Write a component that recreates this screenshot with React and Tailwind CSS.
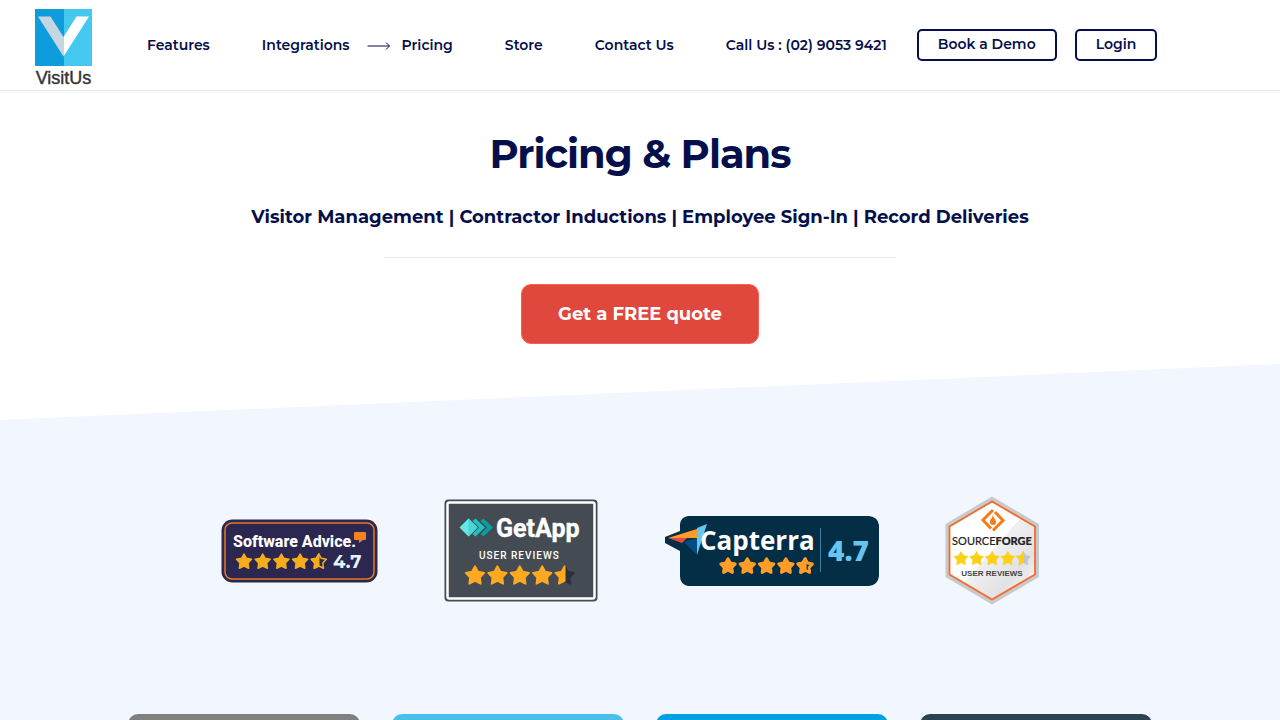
import React from 'react';

const navLinks = [
  { label: 'Features', href: '#features' },
  { label: 'Integrations', href: '#integrations' },
  { label: 'Pricing', href: '#pricing', active: true },
  { label: 'Store', href: '#store' },
  { label: 'Contact Us', href: '#contact' },
  { label: 'Call Us : (02) 9053 9421', href: 'tel:0290539421' },
];

const plans = [
  { id: 'starter', color: 'bg-[#808080]' },
  { id: 'basic', color: 'bg-[#49bfea]' },
  { id: 'business', color: 'bg-[#00a0e3]' },
  { id: 'enterprise', color: 'bg-[#2c4452]' },
];

const STAR = 'M0-10 L3.3-4.2 L10-2.9 L5.4 2 L6.2 9 L0 6 L-6.2 9 L-5.4 2 L-10-2.9 L-3.3-4.2Z';
const LEFT_HALF = 'M0-10 L0 6 L-6.2 9 L-5.4 2 L-10-2.9 L-3.3-4.2Z';

const Stars = ({ x, y, step, scale, fill, rest, outline, round = 2 }) => (
  <g fill={fill} stroke={fill} strokeWidth={round} strokeLinejoin="round">
    {[0, 1, 2, 3].map((i) => (
      <path key={i} d={STAR} transform={`translate(${x + i * step} ${y}) scale(${scale})`} />
    ))}
    <g transform={`translate(${x + 4 * step} ${y}) scale(${scale})`}>
      <path d={STAR} fill={rest} stroke={outline ? fill : rest} />
      <path d={LEFT_HALF} />
    </g>
  </g>
);

const Logo = () => (
  <a href="#home" aria-label="VisitUs" className="shrink-0 pt-2">
    <svg width="58" height="80" viewBox="0 0 58 80">
      <path d="M0 0h29v57H0z" fill="#0d9ddd" />
      <path d="M29 0h28v57H29z" fill="#45c8f0" />
      <path d="M3 7.500h12.500L28.500 28v19.500z" fill="#c6d5e2" />
      <path d="M54 7.500H41.500L28.500 28v19.500z" fill="#fff" />
      <text x="28.500" y="74.500" textAnchor="middle" fontFamily="Liberation Sans, sans-serif" fontSize="18" fill="#333" stroke="#333" strokeWidth="0.400">VisitUs</text>
    </svg>
  </a>
);

const SoftwareAdviceBadge = () => (
  <svg width="157" height="64" viewBox="0 0 157 64" role="img" aria-label="Software Advice 4.7">
    <rect x="0.500" y="0.500" width="156" height="63" rx="11" fill="#2b2750" />
    <rect x="4" y="4" width="149" height="56" rx="7" fill="none" stroke="#e87a1d" strokeWidth="1.500" />
    <text x="12" y="27.500" fontFamily="Roboto, sans-serif" fontWeight="800" fontSize="16" fill="#fff">Software Advice.</text>
    <path d="M134 13h10a1 1 0 0 1 1 1v6a1 1 0 0 1-1 1h-2l-4 3v-3h-4a1 1 0 0 1-1-1v-6a1 1 0 0 1 1-1z" fill="#f58220" />
    <Stars x={23} y={42.500} step={18.700} scale={0.750} fill="#f5ad1b" rest="#2b2750" outline />
    <text x="112" y="49" fontFamily="Montserrat, sans-serif" fontWeight="700" fontSize="18" fill="#e5f3fb">4.7</text>
  </svg>
);

const GetAppBadge = () => (
  <svg width="154" height="104" viewBox="0 0 154 104" role="img" aria-label="GetApp user reviews">
    <rect x="0.500" y="0.500" width="153" height="102" rx="4" fill="#454b52" />
    <rect x="3.500" y="3.500" width="147" height="96" rx="2" fill="none" stroke="#fff" strokeWidth="2.500" />
    <path d="M39.500 19.500l9.500 9-9.500 9-3-2.500 6.500-6.500-6.500-6.500z" fill="#0b9c9d" />
    <path d="M31.500 19.500l9.500 9-9.500 9-3-2.500 6.500-6.500-6.500-6.500z" fill="#1fc1c1" />
    <path d="M24.500 19.500l9 9-9 9-9-9z" fill="#65e9e4" />
    <path d="M24.500 19.500l9 9-9 9z" fill="#49d7d5" />
    <text x="52" y="37.500" fontFamily="Roboto, sans-serif" fontWeight="700" fontSize="25" fill="#fff" stroke="#fff" strokeWidth="0.400">GetApp</text>
    <text x="35" y="59.500" fontFamily="Roboto, sans-serif" fontWeight="500" fontSize="10" letterSpacing="1" fill="#fff">USER REVIEWS</text>
    <Stars x={31} y={76.500} step={22.400} scale={0.920} fill="#ffa922" rest="#29313c" />
  </svg>
);

const CapterraBadge = () => (
  <svg width="215" height="71" viewBox="0 0 215 71" role="img" aria-label="Capterra 4.7">
    <path d="M24 1h181q9 1 10 9v51q-1 9-10 10H24q-8-2-8-10V36L1 28v-6l15-6V9q1-7 8-8z" fill="#042e45" />
    <path d="M4 23l29-9v9z" fill="#ff9d28" />
    <path d="M4 23h19l-5 5z" fill="#e54747" />
    <path d="M20 27l13-4v17z" fill="#044d80" />
    <path d="M33 13l10-4-10 31z" fill="#68c5ed" />
    <text x="36" y="34.500" fontFamily="Open Sans, sans-serif" fontWeight="700" fontSize="26" fill="#fff">Capterra</text>
    <Stars x={64} y={51} step={19.300} scale={0.720} fill="#ff9d28" rest="#042e45" outline round={4} />
    <path d="M156.500 13v44" stroke="#3d7f9f" />
    <text x="164" y="46" fontFamily="Open Sans, sans-serif" fontWeight="800" fontSize="28" fill="#68c5ed">4.7</text>
  </svg>
);

const SourceForgeBadge = () => (
  <svg width="95" height="109" viewBox="0 0 95 109" role="img" aria-label="SourceForge user reviews">
    <defs>
      <linearGradient id="shine" x1="0" y1="0" x2="1" y2="1">
        <stop offset="0.500" stopColor="#fff" />
        <stop offset="0.500" stopColor="#f0f0f2" />
        <stop offset="0.750" stopColor="#e2e2e5" />
        <stop offset="1" stopColor="#fff" />
      </linearGradient>
    </defs>
    <path d="M47 0.500l47 27.500v53L47 108.500 0.500 81v-53z" fill="#c9c9cb" />
    <path d="M47 5.500l43 25v48L47 103.500 4.500 78.500v-48z" fill="url(#shine)" stroke="#f26b2a" strokeWidth="1.800" />
    <path d="M48 14L38 24l8 8.500M48 34.500L58 24.500l-8-8.500" fill="none" stroke="#f47b16" strokeWidth="3" />
    <path d="M48 18c0 4 3 5 3 8a3 3 0 0 1-6 0c0-3 3-4 3-8z" fill="#f47b16" />
    <text x="47" y="49" textAnchor="middle" fontFamily="Lato, sans-serif" fontSize="11" fill="#222" stroke="#222" strokeWidth="0.200">SOURCE<tspan fontWeight="900">FORGE</tspan></text>
    <Stars x={16} y={62.500} step={15.600} scale={0.700} fill="#fbd116" rest="#c4c4c8" round={1} />
    <text x="47" y="80" textAnchor="middle" fontFamily="Liberation Sans, sans-serif" fontWeight="700" fontSize="8" fill="#444">USER REVIEWS</text>
  </svg>
);

const Header = () => (
  <header className="flex h-[91px] items-center border-b border-[#ededed] pr-6 pl-[35px] shadow-xs">
    <Logo />
    <nav className="ml-[54px] flex gap-[52px] text-sm leading-6 font-semibold whitespace-nowrap">
      {navLinks.map((link) => (
        <a key={link.label} href={link.href} className="relative">
          {link.active && (
            <svg className="absolute top-2 -left-[35px]" width="25" height="10" viewBox="0 0 25 10" fill="none" stroke="#040f4b">
              <path d="M0.500 5h22M19 1.500L22.500 5 19 8.500" />
            </svg>
          )}
          {link.label}
        </a>
      ))}
    </nav>
    <div className="ml-[30px] flex gap-[18px] text-sm leading-[26px] font-semibold whitespace-nowrap">
      <a href="#demo" className="rounded-[5px] border-2 border-[#040f4b] px-[19px] pb-0.5">Book a Demo</a>
      <a href="#login" className="rounded-[5px] border-2 border-[#040f4b] px-[19px] pb-0.5">Login</a>
    </div>
  </header>
);

const App = () => {
  return (
    <div className="bg-white font-[Montserrat,Inter,sans-serif] text-[#040f4b]">
      <Header />
      <main>
        <section className="flex flex-col items-center pt-8 text-center">
          <h1 className="text-[40px] leading-[62px] font-bold tracking-tight">Pricing &amp; Plans</h1>
          <h2 className="mt-[18px] text-lg leading-7 font-bold">
            Visitor Management | Contractor Inductions | Employee Sign-In | Record Deliveries
          </h2>
          <hr className="mt-[26px] w-2/5 border-[#e9ebf0]" />
          <button type="button" className="mt-[26px] h-[60px] rounded-[10px] border border-[#f5614f] bg-[#e0483e] px-9 text-lg font-bold text-white">
            Get a FREE quote
          </button>
        </section>

        <section className="mt-5 bg-[#f1f6ff] pt-[132px] [clip-path:polygon(0_56px,100%_0,100%_100%,0_100%)]">
          <div className="flex items-center justify-center gap-[66px] pr-5">
            <SoftwareAdviceBadge />
            <GetAppBadge />
            <CapterraBadge />
            <SourceForgeBadge />
          </div>
          <div className="mx-auto mt-[109px] grid w-4/5 grid-cols-4 gap-8">
            {plans.map((plan) => (
              <div key={plan.id} className={`h-24 rounded-t-[10px] ${plan.color}`} />
            ))}
          </div>
        </section>
      </main>
    </div>
  );
};

export default App;
